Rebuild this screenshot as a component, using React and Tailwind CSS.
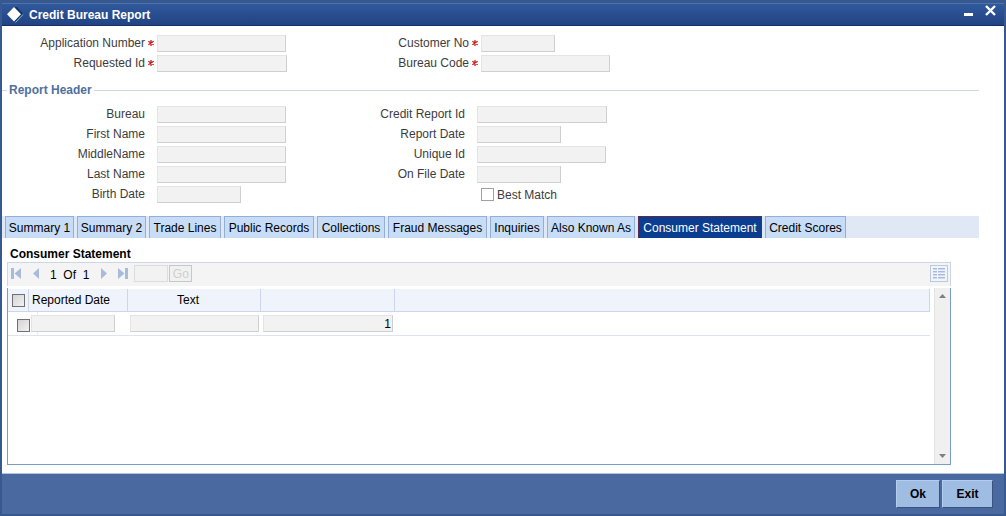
import React from "react";

const fieldBox =
  "h-[17px] border border-t-[#e4e4e4] border-l-[#e4e4e4] border-r-[#cfcfcf] border-b-[#cfcfcf] bg-[#f2f2f2] px-px outline-none";

function Field({ id, label, width, required = false }) {
  return (
    <div className="flex h-[17px] items-center">
      <label htmlFor={id} className="w-[143px] shrink-0 text-right leading-[17px]">
        {label}
      </label>
      <span className="flex w-3 shrink-0 justify-center pb-[2px]">{required && <RequiredMark />}</span>
      <input id={id} type="text" readOnly required={required} className={`${fieldBox} ${width}`} />
    </div>
  );
}

function RequiredMark() {
  return (
    <svg viewBox="0 0 6 6" className="h-[6px] w-[6px]" aria-hidden="true">
      <path stroke="#d01818" strokeWidth="1.3" d="M3 0v6M0.300 1.200l5.400 3.600M5.700 1.200L0.300 4.800" />
    </svg>
  );
}

function NavButton({ label, d, className }) {
  return (
    <button type="button" aria-label={label} className={className}>
      <svg viewBox="0 0 11 12" className="block h-3 w-[11px]" fill="#a9bbdb" aria-hidden="true">
        <path d={d} />
      </svg>
    </button>
  );
}

const tabs = [
  ["Summary 1", "w-[69px]"],
  ["Summary 2", "w-[69px]"],
  ["Trade Lines", "w-[72px]"],
  ["Public Records", "w-[90px]"],
  ["Collections", "w-[68px]"],
  ["Fraud Messages", "w-[99px]"],
  ["Inquiries", "w-[54px]"],
  ["Also Known As", "w-[88px]"],
  ["Consumer Statement", "w-[124px]"],
  ["Credit Scores", "w-[81px]"],
];

function TitleBar() {
  return (
    <header className="flex h-[23px] items-center border-t border-b border-t-[#4a74b0] border-b-[#182f66] bg-linear-to-b from-[#30599c] to-[#214384] pr-2 pl-1">
      <svg viewBox="0 0 18 18" className="h-[18px] w-[18px]" aria-hidden="true">
        <path d="M8 1h3l6 7-8 8z" fill="#0d3560" />
        <path d="M17 8.500 9.500 16.500" stroke="#8fb4d8" strokeWidth="1" />
        <path d="M8 1 15 8.300l-7 7.200L1 8.300z" fill="#fff" />
      </svg>
      <h1 className="ml-[5px] text-[12px] leading-4 font-bold text-white">Credit Bureau Report</h1>
      <div className="ml-auto flex items-center gap-3 pb-2">
        <button type="button" aria-label="Minimize">
          <svg viewBox="0 0 9 11" className="block h-[11px] w-[9px]" aria-hidden="true">
            <path d="M0 8h9v3H0z" fill="#fff" />
          </svg>
        </button>
        <button type="button" aria-label="Close">
          <svg viewBox="0 0 11 11" className="block h-[11px] w-[11px]" aria-hidden="true">
            <path d="M1 1l9 9M10 1l-9 9" stroke="#fff" strokeWidth="2.400" />
          </svg>
        </button>
      </div>
    </header>
  );
}

function Toolbar() {
  return (
    <div className="flex h-[24px] items-center border border-b-0 border-[#cdd6e6] bg-[#f4f4f4] pr-[2px] pb-[2px] pl-[3px] text-black">
      <NavButton label="First" d="M0 0h3v11H0zM10 0v11L3.500 5.500z" />
      <NavButton label="Previous" className="ml-[10px]" d="M7 0v11L1 5.500z" />
      <span className="ml-[7px] pt-[2px] leading-4">1&nbsp; Of&nbsp; 1</span>
      <NavButton label="Next" className="ml-[11px]" d="M1 0v11l6-5.500z" />
      <NavButton label="Last" className="ml-[7px]" d="M0 0v11l6.500-5.500zM7 0h3v11H7z" />
      <input
        type="text"
        aria-label="Page number"
        readOnly
        className="ml-[5px] h-[17px] w-[34px] border border-[#dcdcdc] bg-[#f2f2f2]"
      />
      <button
        type="button"
        disabled
        className="ml-px h-[17px] w-[23px] border border-[#c3c7cf] bg-[#f1f1f1] text-[12px] leading-4 text-[#cfcfcf]"
      >
        Go
      </button>
      <button
        type="button"
        aria-label="Table view"
        className="ml-auto flex h-[17px] w-[18px] items-center justify-center border border-[#bccadf] bg-[#f1f4f9]"
      >
        <svg viewBox="0 0 12 11" className="h-[11px] w-3" shapeRendering="crispEdges" aria-hidden="true">
          <path d="M0 0h4v1H0zM5 0h7v1H5zM0 3h4v1H0zM5 3h7v1H5zM0 6h4v1H0zM5 6h7v1H5zM0 9h4v1H0zM5 9h7v1H5z" fill="#a9b9dc" />
          <path d="M0 1h4v1H0zM5 1h7v1H5zM0 4h4v1H0zM5 4h7v1H5zM0 7h4v1H0zM5 7h7v1H5zM0 10h4v1H0zM5 10h7v1H5z" fill="#cfdaee" />
        </svg>
      </button>
    </div>
  );
}

const tick =
  "block size-[13px] shrink-0 appearance-none border border-[#707070] bg-linear-to-br from-[#d4d4d4] to-[#f2f2f2]";

function StatementTable() {
  const head = "h-[23px] border-r border-b border-[#cdd6e9] bg-[#eff3fb] p-0 font-normal";
  const cell = "h-[24px] border-b border-[#dde4f0] p-0";
  return (
    <div className="mt-[2px] flex h-[177px] border border-t-0 border-[#7a9cc6]">
      <div className="min-w-0 grow pt-px pr-[4px]">
        <table className="w-full table-fixed border-separate border-spacing-0 text-black">
          <colgroup>
            <col className="w-[21px]" />
            <col className="w-[99px]" />
            <col className="w-[133px]" />
            <col className="w-[134px]" />
            <col />
          </colgroup>
          <thead>
            <tr>
              <th className={`${head} pl-1`}>
                <input type="checkbox" aria-label="Select all rows" className={tick} />
              </th>
              <th className={`${head} pl-[3px] text-left`}>Reported Date</th>
              <th className={`${head} pr-3`}>Text</th>
              <th className={head} aria-label="Sequence" />
              <th className={head} aria-label="Blank" />
            </tr>
          </thead>
          <tbody>
            <tr>
              <td className={cell}>
                <div className="flex h-[23px] w-[30px] items-end border-r border-[#e6ebf4] pb-[3px] pl-[9px]">
                  <input type="checkbox" aria-label="Select row 1" className={tick} />
                </div>
              </td>
              <td className={`${cell} pl-[2px]`}>
                <input aria-label="Reported Date" type="text" readOnly className={`${fieldBox} block w-[84px]`} />
              </td>
              <td className={`${cell} pl-[2px]`}>
                <input aria-label="Text" type="text" readOnly className={`${fieldBox} block w-[129px]`} />
              </td>
              <td className={`${cell} pl-[2px]`}>
                <input
                  aria-label="Sequence"
                  type="text"
                  readOnly
                  value="1"
                  className={`${fieldBox} block w-[130px] text-right`}
                />
              </td>
              <td className={cell} />
            </tr>
          </tbody>
        </table>
      </div>
      <div className="flex w-4 shrink-0 flex-col items-center justify-between border-l border-[#e2e2e2] bg-[#f0f0f0] py-[6px]">
        <svg viewBox="0 0 7 4" className="h-1 w-[7px]" aria-hidden="true">
          <path d="M0 4 3.500 0 7 4z" fill="#808080" />
        </svg>
        <svg viewBox="0 0 7 4" className="h-1 w-[7px]" aria-hidden="true">
          <path d="M0 0 3.500 4 7 0z" fill="#808080" />
        </svg>
      </div>
    </div>
  );
}

const footerButton =
  "h-[28px] border border-t-[#b5cdec] border-l-[#b5cdec] border-r-[#3a5280] border-b-[#3a5280] bg-[#9fbce3] text-[12px] font-bold text-black";

export default function App() {
  return (
    <div className="flex min-h-screen flex-col bg-[#385890] px-[2px] pt-[3px] pb-[2px] font-['Liberation_Sans',Arial,sans-serif] text-[12px] leading-4 text-[#3c3c3c]">
      <TitleBar />
      <main className="grow bg-white pr-[25px] pb-2">
        <section className="grid grid-cols-[324px_1fr] gap-y-[3px] pt-[9px]">
          <Field id="application-number" label="Application Number" width="w-[129px]" required />
          <Field id="customer-no" label="Customer No" width="w-[74px]" required />
          <Field id="requested-id" label="Requested Id" width="w-[130px]" required />
          <Field id="bureau-code" label="Bureau Code" width="w-[129px]" required />
        </section>

        <fieldset className="mt-[10px] border-t border-[#ccd6e6]">
          <legend className="ml-[5px] px-[2px] font-bold text-[#4f6f9f]">Report Header</legend>
          <div className="grid grid-cols-[320px_1fr] pt-2">
            <div className="flex flex-col gap-[3px]">
              <Field id="bureau" label="Bureau" width="w-[129px]" />
              <Field id="first-name" label="First Name" width="w-[129px]" />
              <Field id="middle-name" label="MiddleName" width="w-[129px]" />
              <Field id="last-name" label="Last Name" width="w-[129px]" />
              <Field id="birth-date" label="Birth Date" width="w-[84px]" />
            </div>
            <div className="flex flex-col gap-[3px]">
              <Field id="credit-report-id" label="Credit Report Id" width="w-[130px]" />
              <Field id="report-date" label="Report Date" width="w-[84px]" />
              <Field id="unique-id" label="Unique Id" width="w-[129px]" />
              <Field id="on-file-date" label="On File Date" width="w-[84px]" />
              <label className="flex h-[17px] items-center gap-[3px] pl-[159px]">
                <input type="checkbox" className="size-[13px] appearance-none border border-[#a0a0a0] bg-white" />
                Best Match
              </label>
            </div>
          </div>
        </fieldset>

        <nav role="tablist" className="mt-[13px] flex gap-[3px] bg-[#e0e8f5] pl-[3px]">
          {tabs.map(([name, width]) => {
            const active = name === "Consumer Statement";
            return (
              <button
                key={name}
                type="button"
                role="tab"
                aria-selected={active}
                className={`h-[22px] border border-b-0 whitespace-nowrap ${width} ${
                  active ? "border-[#5a2a4a] bg-[#0b3d91] text-white" : "border-[#93afd6] bg-[#c6dcf7] text-black"
                }`}
              >
                {name}
              </button>
            );
          })}
        </nav>

        <section className="mr-[28px] ml-[5px] pt-2">
          <h2 className="pl-[3px] font-bold text-black">Consumer Statement</h2>
          <Toolbar />
          <StatementTable />
        </section>
      </main>
      <footer className="flex h-[41px] items-center justify-end gap-[2px] border-t border-[#b8c4d8] bg-[#4a69a1] pr-[11px]">
        <button type="button" className={`${footerButton} w-[44px]`}>
          Ok
        </button>
        <button type="button" className={`${footerButton} w-[51px]`}>
          Exit
        </button>
      </footer>
    </div>
  );
}
